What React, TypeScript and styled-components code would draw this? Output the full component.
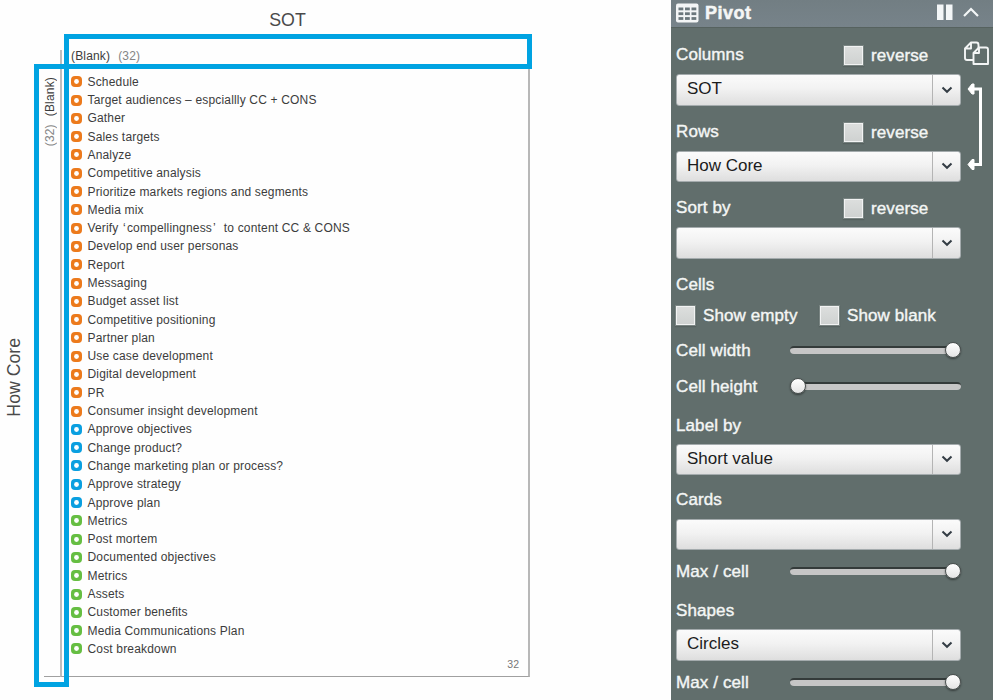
import React from "react";
import styled, { createGlobalStyle } from "styled-components";

const GlobalStyle = createGlobalStyle`
  * { box-sizing: border-box; }
  body { margin: 0; background: #fefefe; overflow: hidden; font-family: "Liberation Sans", Arial, sans-serif; }
`;

const Page = styled.div`
  display: grid;
  grid-template-columns: 671px 322px;
  height: 700px;
  overflow: hidden;
`;

const Chart = styled.main`
  position: relative;
  display: grid;
  grid-template-columns: 44px 16px 470px;
  grid-template-rows: 50px 19px 608px;
  color: #3c3c3c;
`;

const ColumnTitle = styled.h1`
  grid-column: 3;
  margin: 0;
  padding: 10px 15px 0 0;
  text-align: center;
  font-size: 17.8px;
  line-height: 21px;
  font-weight: 400;
  color: #4a4a4a;
`;

const RowTitle = styled.div`
  grid-column: 1;
  grid-row: 1 / 4;
  writing-mode: vertical-rl;
  transform: rotate(180deg);
  align-self: start;
  justify-self: start;
  margin: 338px 0 0 4px;
  font-size: 17.7px;
  line-height: 21px;
  color: #4a4a4a;
`;

const ColumnHeader = styled.div`
  grid-column: 3;
  grid-row: 2;
  display: flex;
  gap: 8px;
  padding-left: 9px;
  border-left: 2px solid #bdbdbd;
  font-size: 12px;
  line-height: 13px;
  letter-spacing: 0.17px;
`;

const RowHeader = styled.div`
  grid-column: 1 / 3;
  grid-row: 3;
  display: flex;
  gap: 8px;
  justify-self: end;
  align-self: start;
  writing-mode: vertical-rl;
  transform: rotate(180deg);
  margin: 8px 3.5px 0 0;
  font-size: 12px;
  line-height: 14px;
  letter-spacing: 0.17px;
`;

const Count = styled.span`
  color: #858585;
`;

const Cell = styled.section`
  grid-column: 3;
  grid-row: 3;
  border-left: 2px solid #bdbdbd;
  border-right: 2px solid #b8b8b8;
  border-bottom: 1px solid #a0a0a0;
  padding: 3.6px 9px 0 9px;
`;

const Baseline = styled.div`
  grid-column: 2;
  grid-row: 3;
  align-self: end;
  height: 1px;
  background: #a0a0a0;
`;

const Items = styled.ul`
  list-style: none;
  margin: 0;
  padding: 0;
`;

const Item = styled.li`
  display: flex;
  align-items: center;
  height: 18.31px;
  font-size: 12px;
  letter-spacing: 0.17px;
  white-space: pre;
`;

const Ring = styled.svg`
  flex: none;
  margin-right: 5.5px;
`;

const Quote = styled.span`
  padding: 0 1px;
`;

const Total = styled.div`
  text-align: right;
  font-size: 10.5px;
  line-height: 12px;
  color: #777;
`;

const Highlight = styled.div<{ $x: number; $y: number; $w: number; $h: number }>`
  position: absolute;
  left: ${(p) => p.$x}px;
  top: ${(p) => p.$y}px;
  width: ${(p) => p.$w}px;
  height: ${(p) => p.$h}px;
  border: 5px solid #00a3e2;
`;

const Panel = styled.aside`
  display: flex;
  flex-direction: column;
  background: #616e6c;
  color: #f4f6f5;
  font-size: 17px;
`;

const PanelHeader = styled.header`
  display: flex;
  align-items: center;
  height: 28px;
  padding: 0 13px 2px 5px;
  background: linear-gradient(#727e83, #77838a);
  border-bottom: 1px solid #56625f;
`;

const PanelTitle = styled.h2`
  flex: 1;
  margin: 0 0 0 6px;
  padding-top: 1px;
  font-size: 18px;
  line-height: 22px;
  font-weight: 700;
  letter-spacing: 0.5px;
  -webkit-text-stroke: 0.5px #f4f6f5;
`;

const PanelBody = styled.div`
  display: grid;
  grid-template-columns: 285px 1fr;
  padding-left: 5px;
`;

const Rail = styled.div`
  display: flex;
  flex-direction: column;
  padding: 13px 0 0 3px;
  gap: 15px;
`;

const Line = styled.div<{ $h: number; $mt?: number }>`
  display: flex;
  align-items: center;
  height: ${(p) => p.$h}px;
  margin-top: ${(p) => p.$mt ?? 0}px;
  letter-spacing: 0.1px;
  -webkit-text-stroke: 0.4px #f4f6f5;
`;

const Caption = styled.span<{ $w?: number; $lift?: boolean }>`
  width: ${(p) => (p.$w ? p.$w + "px" : "auto")};
  padding-bottom: ${(p) => (p.$lift ? 2 : 0)}px;
  white-space: nowrap;
`;

const Check = styled.label<{ $w?: number }>`
  display: flex;
  align-items: center;
  gap: 8px;
  width: ${(p) => (p.$w ? p.$w + "px" : "auto")};
  white-space: nowrap;
`;

const Box = styled.span`
  width: 19px;
  height: 19px;
  margin-top: -1px;
  border: 1px solid #f2f3f3;
  outline: 1px solid #7a8583;
  outline-offset: -0.5px;
  background: linear-gradient(#dcdedd, #cfd2d1);
  box-shadow: 0 1px 1px 1px #56615f;
`;

const Select = styled.div`
  display: grid;
  grid-template-columns: 1fr 28px;
  height: 31.5px;
  border: 1px solid #a4abad;
  border-radius: 3px;
  background: linear-gradient(#fbfbfb, #f2f2f2 45%, #dedede);
  color: #1c1c1c;
`;

const Value = styled.span`
  padding-left: 10px;
  line-height: 28px;
`;

const Drop = styled.span`
  display: grid;
  place-items: center;
  border-left: 1px solid #b4b4b4;
`;

const Slider = styled.div<{ $end: boolean }>`
  display: flex;
  align-items: center;
  justify-content: ${(p) => (p.$end ? "flex-end" : "flex-start")};
  width: 171px;
  height: 8px;
  margin-top: -2px;
  border-top: 2px solid #343b3a;
  border-radius: 4px;
  background: #c6c6c6;
`;

const Knob = styled.i`
  flex: none;
  width: 16px;
  height: 16px;
  margin-top: -2px;
  border: 1px solid #4b5150;
  border-radius: 50%;
  background: linear-gradient(#fff, #e4e4e4);
  box-shadow: 0 1px 2px rgba(0, 0, 0, 0.45);
`;

const ORANGE = "#ec7a1c";
const BLUE = "#0a9fe0";
const GREEN = "#66be42";

const groups: { color: string; names: string[] }[] = [
  {
    color: ORANGE,
    names: [
      "Schedule",
      "Target audiences – espciallly CC + CONS",
      "Gather",
      "Sales targets",
      "Analyze",
      "Competitive analysis",
      "Prioritize markets regions and segments",
      "Media mix",
      "Verify ‘compellingness’  to content CC & CONS",
      "Develop end user personas",
      "Report",
      "Messaging",
      "Budget asset list",
      "Competitive positioning",
      "Partner plan",
      "Use case development",
      "Digital development",
      "PR",
      "Consumer insight development",
    ],
  },
  {
    color: BLUE,
    names: [
      "Approve objectives",
      "Change product?",
      "Change marketing plan or process?",
      "Approve strategy",
      "Approve plan",
    ],
  },
  {
    color: GREEN,
    names: [
      "Metrics",
      "Post mortem",
      "Documented objectives",
      "Metrics",
      "Assets",
      "Customer benefits",
      "Media Communications Plan",
      "Cost breakdown",
    ],
  },
];

function ItemName({ name }: { name: string }) {
  return (
    <span>
      {name.split(/([‘’])/).map((part, i) => (i % 2 ? <Quote key={i}>{part}</Quote> : part))}
    </span>
  );
}

function TableIcon() {
  return (
    <svg width="23" height="20" viewBox="0 0 23 20">
      <rect x="0" y="0.5" width="22.5" height="19" rx="2" fill="#f3f5f6" />
      {[2.5, 9, 15.5].map((x) =>
        [4.5, 9.3, 14.1].map((y) => (
          <rect key={`${x}-${y}`} x={x} y={y} width="4.8" height="2.8" fill="#6b777c" />
        ))
      )}
    </svg>
  );
}

function HeaderControls() {
  return (
    <svg width="46" height="20" viewBox="0 0 46 20">
      <path d="M3 1.500h6.500v15.500H3zM12 1.500h6.500v15.500H12z" fill="#f3f6f7" />
      <path d="M30 13l7-7 7 7" fill="none" stroke="#f3f6f7" strokeWidth="2.2" />
    </svg>
  );
}

function CopyIcon() {
  return (
    <svg width="26" height="25" viewBox="0 0 26 25" fill="#616e6c" stroke="#f3f5f5" strokeWidth="1.9" strokeLinejoin="round">
      <path d="M7 1.500H12.500Q14.500 1.500 14.500 4V19H3Q1 19 1 17V7.500zM7 1.500V7.500H1" />
      <path d="M15 6.500h7Q24 6.500 24 8.500V23H9.500V12zM15 6.500V12H9.500" />
    </svg>
  );
}

function SwapIcon() {
  return (
    <svg width="20" height="90" viewBox="0 0 20 90">
      <path d="M9 8h7.500v75.500H9" fill="none" stroke="#fff" strokeWidth="3" />
      <path d="M4 8l4-5h2v10H8zM4 83.500l4-5h2v10H8z" fill="#fff" stroke="#fff" strokeLinejoin="round" />
    </svg>
  );
}

function SelectField({ value = "" }: { value?: string }) {
  return (
    <Select>
      <Value>{value}</Value>
      <Drop>
        <svg width="12" height="8" viewBox="0 0 12 8">
          <path d="M1.500 1.500L6 5.800l4.500-4.300" fill="none" stroke="#343d45" strokeWidth="2" />
        </svg>
      </Drop>
    </Select>
  );
}

function ReverseRow({ label, mt }: { label: string; mt: number }) {
  return (
    <Line $h={36} $mt={mt}>
      <Caption $w={168} $lift>
        {label}
      </Caption>
      <Check>
        <Box />
        reverse
      </Check>
    </Line>
  );
}

function SliderRow({ label, h, mt, end = true }: { label: string; h: number; mt: number; end?: boolean }) {
  return (
    <Line $h={h} $mt={mt}>
      <Caption $w={114}>{label}</Caption>
      <Slider $end={end}>
        <Knob />
      </Slider>
    </Line>
  );
}

export default function App() {
  return (
    <>
      <GlobalStyle />
      <Page>
        <Chart>
          <ColumnTitle>SOT</ColumnTitle>
          <RowTitle>How Core</RowTitle>
          <ColumnHeader>
            <span>(Blank)</span>
            <Count>(32)</Count>
          </ColumnHeader>
          <RowHeader>
            <Count>(32)</Count>
            <span>(Blank)</span>
          </RowHeader>
          <Baseline />
          <Cell>
            <Items>
              {groups.flatMap((g) =>
                g.names.map((name, i) => (
                  <Item key={g.color + i}>
                    <Ring width="11" height="11" viewBox="0 0 11 11">
                      <rect width="11" height="11" rx="4" fill={g.color} />
                      <circle cx="5.5" cy="5.5" r="2.4" fill="#fff" />
                    </Ring>
                    <ItemName name={name} />
                  </Item>
                ))
              )}
            </Items>
            <Total>32</Total>
          </Cell>
          <Highlight $x={64} $y={34} $w={468} $h={35} />
          <Highlight $x={34} $y={64} $w={35} $h={623} />
        </Chart>
        <Panel>
          <PanelHeader>
            <TableIcon />
            <PanelTitle>Pivot</PanelTitle>
            <HeaderControls />
          </PanelHeader>
          <PanelBody>
            <div>
              <ReverseRow label="Columns" mt={10} />
              <SelectField value="SOT" />
              <ReverseRow label="Rows" mt={9} />
              <SelectField value="How Core" />
              <ReverseRow label="Sort by" mt={9} />
              <SelectField />
              <Line $h={32} $mt={10}>
                <Caption>Cells</Caption>
              </Line>
              <Line $h={30}>
                <Check $w={144}>
                  <Box />
                  Show empty
                </Check>
                <Check>
                  <Box />
                  Show blank
                </Check>
              </Line>
              <SliderRow label="Cell width" h={36} mt={2} />
              <SliderRow label="Cell height" h={36} mt={0} end={false} />
              <Line $h={36} $mt={3}>
                <Caption>Label by</Caption>
              </Line>
              <SelectField value="Short value" />
              <Line $h={36} $mt={7.5}>
                <Caption $lift>Cards</Caption>
              </Line>
              <SelectField />
              <SliderRow label="Max / cell" h={36} mt={4} />
              <Line $h={36} $mt={3}>
                <Caption>Shapes</Caption>
              </Line>
              <SelectField value="Circles" />
              <SliderRow label="Max / cell" h={36} mt={4} />
            </div>
            <Rail>
              <CopyIcon />
              <SwapIcon />
            </Rail>
          </PanelBody>
        </Panel>
      </Page>
    </>
  );
}
